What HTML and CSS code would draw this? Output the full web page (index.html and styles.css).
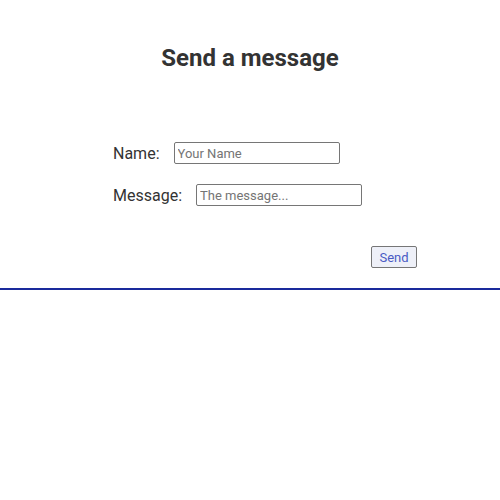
FILE: index.html
```html
<!DOCTYPE html>
<html>
<head>
<meta charset="utf-8">
<link rel="stylesheet" href="styles.css">
</head>
<body>
<div class="page">
  <h1 class="title">Send a message</h1>
  <form class="form">
    <div class="row">
      <label class="label">Name:</label>
      <input class="field" type="text" placeholder="Your Name">
    </div>
    <div class="row">
      <label class="label">Message:</label>
      <input class="field" type="text" placeholder="The message...">
    </div>
    <div class="actions">
      <button class="send" type="button">Send</button>
    </div>
  </form>
  <hr class="divider">
</div>
</body>
</html>
```
FILE: styles.css
```css
html, body {
  margin: 0;
  padding: 0;
  background: #ffffff;
}
body {
  font-family: Roboto, "Liberation Sans", sans-serif;
  color: #333333;
}
.page {
  padding-top: 43px;
}
.title {
  margin: 0;
  text-align: center;
  font-size: 24px;
  font-weight: 700;
  line-height: 30px;
  color: #333333;
}
.form {
  margin: 69px 0 0 113px;
  width: 304px;
  display: flex;
  flex-direction: column;
}
.row {
  display: flex;
  align-items: center;
  gap: 14px;
  height: 22px;
  margin-bottom: 20px;
}
.label {
  font-size: 16px;
  color: #333333;
}
.field {
  box-sizing: border-box;
  width: 166px;
  height: 22px;
  margin: 0;
  padding: 1px 3px;
  border: 1px solid #767676;
  border-radius: 2px;
  font-family: Roboto, "Liberation Sans", sans-serif;
  font-size: 13px;
  color: #333;
}
.field::placeholder {
  color: #757575;
}
.actions {
  display: flex;
  justify-content: flex-end;
  margin-top: 20px;
}
.send {
  box-sizing: border-box;
  width: 46px;
  height: 22px;
  padding: 0;
  border: 1px solid #767676;
  border-radius: 2px;
  background: #eef0f8;
  color: #4a5bc4;
  font-family: Roboto, "Liberation Sans", sans-serif;
  font-size: 13px;
}
.divider {
  margin: 20px 0 0 0;
  border: 0;
  height: 2px;
  background: #1a2a9c;
}
```
